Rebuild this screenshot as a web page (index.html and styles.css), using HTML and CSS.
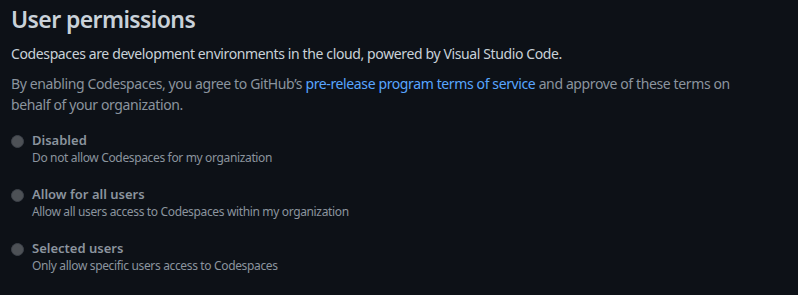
FILE: index.html
```html
<!DOCTYPE html>
<html lang="en">
<head>
    <meta charset="UTF-8">
    <title>User permissions</title>
    <link rel="stylesheet" href="styles.css">
</head>
<body>
    <div class="settings">
        <h2 class="settings-title">User permissions</h2>
        <p class="lead">Codespaces are development environments in the cloud, powered by Visual Studio Code.</p>
        <p class="note">By enabling Codespaces, you agree to GitHub’s <a href="#">pre-release program terms of service</a> and approve of these terms on behalf of your organization.</p>

        <form class="options">
            <label class="option">
                <input type="radio" name="access" disabled>
                <span class="option-text">
                    <span class="option-title">Disabled</span>
                    <span class="option-desc">Do not allow Codespaces for my organization</span>
                </span>
            </label>
            <label class="option">
                <input type="radio" name="access" disabled>
                <span class="option-text">
                    <span class="option-title">Allow for all users</span>
                    <span class="option-desc">Allow all users access to Codespaces within my organization</span>
                </span>
            </label>
            <label class="option">
                <input type="radio" name="access" disabled>
                <span class="option-text">
                    <span class="option-title">Selected users</span>
                    <span class="option-desc">Only allow specific users access to Codespaces</span>
                </span>
            </label>
        </form>
    </div>
</body>
</html>
```

FILE: styles.css
```css
body {
    margin: 0;
    background-color: #0d1117;
    font-family: "Segoe UI", "Noto Sans", sans-serif;
    color: #c9d1d9;
}

.settings {
    width: 740px;
    padding: 4px 11px 0;
}

.settings-title {
    margin: 0 0 9px;
    font-size: 23px;
    font-weight: 600;
    line-height: 30px;
    letter-spacing: -0.6px;
    color: #c9d1d9;
}

.lead {
    margin: 0 0 9px;
    font-size: 14px;
    line-height: 21px;
    letter-spacing: -0.38px;
}

.note {
    margin: 0 0 16px;
    font-size: 14px;
    line-height: 21px;
    letter-spacing: -0.38px;
    color: #8b949e;
}

.note a {
    color: #58a6ff;
    text-decoration: none;
}

.options {
    display: flex;
    flex-direction: column;
    gap: 18px;
}

.option {
    display: flex;
    align-items: flex-start;
    gap: 8px;
}

.option input {
    appearance: none;
    width: 13px;
    height: 13px;
    margin: 4px 0 0;
    border-radius: 50%;
    background-color: #4d5156;
    border: 1px solid #3d424a;
    box-sizing: border-box;
}

.option-text {
    display: flex;
    flex-direction: column;
}

.option-title {
    font-size: 13px;
    font-weight: 600;
    line-height: 18px;
    color: #8b949e;
}

.option-desc {
    font-size: 12px;
    line-height: 18px;
    letter-spacing: -0.35px;
    color: #8b949e;
}
```
